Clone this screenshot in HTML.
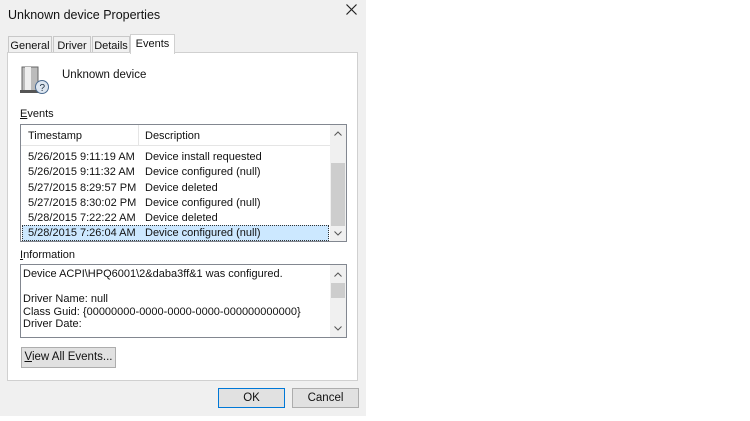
<!DOCTYPE html><html><head><style>
*{margin:0;padding:0;box-sizing:border-box}
body{width:750px;height:421px;background:#fff;font-family:"Liberation Sans",sans-serif;font-size:11px;color:#111;position:relative;overflow:hidden}
.a{position:absolute}
.dlg{left:0;top:0;width:366px;height:416px;background:#f0f0f0}
.tab{position:absolute;top:36px;height:17px;border:1px solid #c8c8c8;border-bottom:none;background:#f0f0f0;padding:3px 0 0;text-align:center}
.row{position:absolute;left:8px;height:15px;line-height:15px}
.btn{position:absolute;border:1px solid #adadad;background:#e1e1e1;text-align:center;line-height:18px;font-size:11.5px}
.chev{position:absolute;left:4px}
</style></head><body>
<div class="a dlg"></div>
<div class="a" style="left:8px;top:8px;font-size:12.5px">Unknown device Properties</div>
<svg class="a" style="left:346px;top:4px" width="11" height="11" viewBox="0 0 11 11"><path d="M0.5 0.5L10.5 10.5M10.5 0.5L0.5 10.5" stroke="#222" stroke-width="1.2"/></svg>
<div class="tab" style="left:8px;width:44px">General</div>
<div class="tab" style="left:53px;width:38px">Driver</div>
<div class="tab" style="left:92px;width:38px">Details</div>
<div class="a" style="left:7px;top:52px;width:351px;height:329px;background:#fff;border:1px solid #d0d0d0"></div>
<div class="tab" style="left:130px;top:34px;width:45px;height:20px;background:#fff;border-color:#d0d0d0;padding-top:3px;z-index:2">Events</div>
<svg class="a" style="left:20px;top:64px" width="30" height="30" viewBox="0 0 30 30"><rect x="2" y="3" width="16" height="24" fill="#bbb" stroke="#666"/><rect x="5" y="3" width="6" height="24" fill="#eee"/><rect x="0" y="26" width="22" height="3" fill="#555"/><circle cx="22" cy="23" r="6.5" fill="#dde6f0" stroke="#4a6a90"/><text x="19.5" y="27" font-size="10" fill="#234" font-family="Liberation Sans">?</text></svg>
<div class="a" style="left:62px;top:69px;font-size:11.5px">Unknown device</div>
<div class="a" style="left:20px;top:108px"><u>E</u>vents</div>
<div class="a" style="left:20px;top:124px;width:327px;height:118px;border:1px solid #828790;background:#fff">
<div class="a" style="left:0;top:0;width:310px;height:21px;border-bottom:1px solid #e5e5e5"></div>
<div class="a" style="left:117px;top:0;width:1px;height:21px;background:#e5e5e5"></div>
<div class="a" style="left:7px;top:5px">Timestamp</div>
<div class="a" style="left:124px;top:5px">Description</div>
<div class="a" style="left:309px;top:0;width:16px;height:116px;background:#f0f0f0"></div>
<div class="a" style="left:310px;top:38px;width:14px;height:63px;background:#cdcdcd"></div>
<svg class="a" style="left:313px;top:6px" width="8" height="5"><path d="M0.5 4.5L4 1L7.5 4.5" stroke="#555" fill="none"/></svg>
<svg class="a" style="left:313px;top:106px" width="8" height="5"><path d="M0.5 0.5L4 4L7.5 0.5" stroke="#555" fill="none"/></svg>
<div class="a" style="left:1px;top:100px;width:307px;height:16px;background:#cce8ff;border:1px dotted #333"></div>
<div class="row" style="top:25px;left:7px">5/26/2015 9:11:19 AM</div><div class="row" style="top:25px;left:124px">Device install requested</div>
<div class="row" style="top:40px;left:7px">5/26/2015 9:11:32 AM</div><div class="row" style="top:40px;left:124px">Device configured (null)</div>
<div class="row" style="top:56px;left:7px">5/27/2015 8:29:57 PM</div><div class="row" style="top:56px;left:124px">Device deleted</div>
<div class="row" style="top:71px;left:7px">5/27/2015 8:30:02 PM</div><div class="row" style="top:71px;left:124px">Device configured (null)</div>
<div class="row" style="top:86px;left:7px">5/28/2015 7:22:22 AM</div><div class="row" style="top:86px;left:124px">Device deleted</div>
<div class="row" style="top:101px;left:7px">5/28/2015 7:26:04 AM</div><div class="row" style="top:101px;left:124px">Device configured (null)</div>
</div>
<div class="a" style="left:20px;top:249px"><u>I</u>nformation</div>
<div class="a" style="left:20px;top:264px;width:327px;height:74px;border:1px solid #828790;background:#fff;line-height:12.5px">
<div class="a" style="left:2px;top:3px">Device ACPI\HPQ6001\2&amp;daba3ff&amp;1 was configured.</div>
<div class="a" style="left:2px;top:28px">Driver Name: null<br>Class Guid: {00000000-0000-0000-0000-000000000000}<br>Driver Date:</div>
<div class="a" style="left:309px;top:0;width:16px;height:72px;background:#f0f0f0"></div>
<div class="a" style="left:310px;top:18px;width:14px;height:15px;background:#cdcdcd"></div>
<svg class="a" style="left:313px;top:7px" width="8" height="5"><path d="M0.5 4.5L4 1L7.5 4.5" stroke="#555" fill="none"/></svg>
<svg class="a" style="left:313px;top:61px" width="8" height="5"><path d="M0.5 0.5L4 4L7.5 0.5" stroke="#555" fill="none"/></svg>
</div>
<div class="btn" style="left:21px;top:347px;width:95px;height:21px"><u>V</u>iew All Events...</div>
<div class="btn" style="left:218px;top:388px;width:67px;height:20px;border-color:#0078d7">OK</div>
<div class="btn" style="left:292px;top:388px;width:67px;height:20px">Cancel</div>
</body></html>
